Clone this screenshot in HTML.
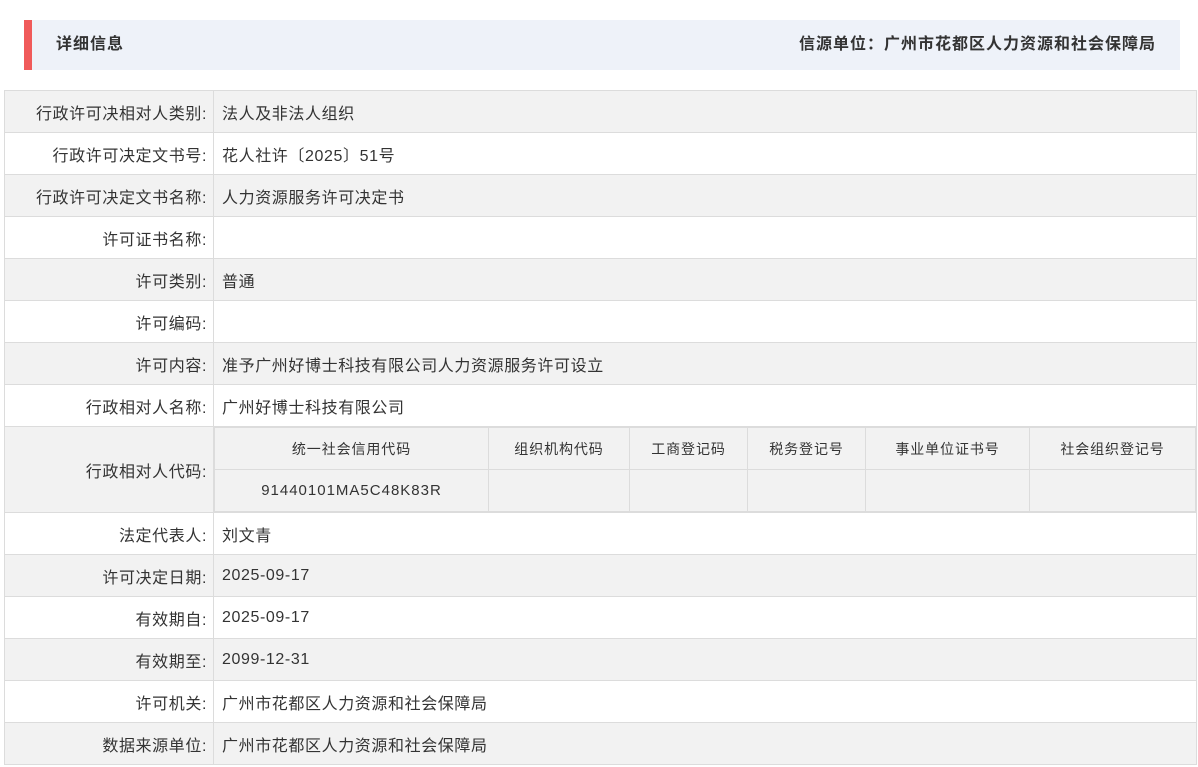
<!DOCTYPE html>
<html><head><meta charset="utf-8"><style>
body{margin:0;background:#fff;font-family:"Liberation Sans","Noto Sans CJK SC",sans-serif;color:#333;font-size:16px;letter-spacing:0.6px;width:1198px;height:767px;overflow:hidden;position:relative}
.hd{position:absolute;left:24px;top:20px;width:1156px;height:50px;background:#eef2f9;border-left:8px solid #f05a5a;box-sizing:border-box;font-weight:bold;font-size:16px;letter-spacing:1px;line-height:50px}
.hd .l{position:absolute;left:24px}
.hd .r{position:absolute;right:24px}
table.m{position:absolute;left:4px;top:90px;width:1193px;border-collapse:collapse;table-layout:fixed}
table.m>tbody>tr>td{border:1px solid #dcdcdc;height:42px;padding:0 8px;box-sizing:border-box}
table.m>tbody>tr>td:first-child{text-align:right;padding-right:6px;width:209px}
tr.g>td{background:#f2f2f2}
tr.w>td{background:#fff}
table.s{width:100%;border-collapse:collapse;table-layout:fixed;font-size:14px;letter-spacing:0.9px}
table.s td{border:1px solid #dcdcdc;height:42px;text-align:center;background:#f2f2f2;padding:0;box-sizing:border-box}
td.c{padding:0!important}
</style></head><body>
<div class="hd"><span class="l">详细信息</span><span class="r">信源单位：广州市花都区人力资源和社会保障局</span></div>
<table class="m"><tbody>
<tr class="g"><td>行政许可决相对人类别:</td><td>法人及非法人组织</td></tr>
<tr class="w"><td>行政许可决定文书号:</td><td>花人社许〔2025〕51号</td></tr>
<tr class="g"><td>行政许可决定文书名称:</td><td>人力资源服务许可决定书</td></tr>
<tr class="w"><td>许可证书名称:</td><td></td></tr>
<tr class="g"><td>许可类别:</td><td>普通</td></tr>
<tr class="w"><td>许可编码:</td><td></td></tr>
<tr class="g"><td>许可内容:</td><td>准予广州好博士科技有限公司人力资源服务许可设立</td></tr>
<tr class="w"><td>行政相对人名称:</td><td>广州好博士科技有限公司</td></tr>
<tr class="g"><td style="height:86px">行政相对人代码:</td><td class="c" style="height:86px">
<table class="s"><colgroup><col style="width:274px"><col style="width:141px"><col style="width:118px"><col style="width:118px"><col style="width:164px"><col></colgroup>
<tr><td>统一社会信用代码</td><td>组织机构代码</td><td>工商登记码</td><td>税务登记号</td><td>事业单位证书号</td><td>社会组织登记号</td></tr>
<tr><td style="font-size:15px;letter-spacing:1px">91440101MA5C48K83R</td><td></td><td></td><td></td><td></td><td></td></tr></table></td></tr>
<tr class="w"><td>法定代表人:</td><td>刘文青</td></tr>
<tr class="g"><td>许可决定日期:</td><td>2025-09-17</td></tr>
<tr class="w"><td>有效期自:</td><td>2025-09-17</td></tr>
<tr class="g"><td>有效期至:</td><td>2099-12-31</td></tr>
<tr class="w"><td>许可机关:</td><td>广州市花都区人力资源和社会保障局</td></tr>
<tr class="g"><td>数据来源单位:</td><td>广州市花都区人力资源和社会保障局</td></tr>
</tbody></table>
</body></html>
